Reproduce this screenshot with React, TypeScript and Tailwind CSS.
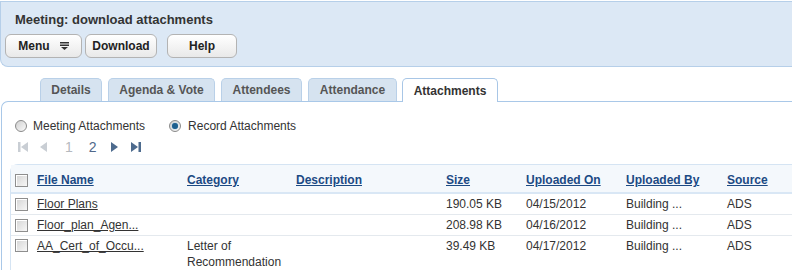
import React from "react";

const Check = () => (
  <div className="w-[13px] h-[13px] border border-[#8e8e8e] bg-gradient-to-br from-[#d4d4d4] to-[#f7f7f7] shadow-[inset_1px_1px_0_#fff]" />
);

const Radio = ({ on }: { on?: boolean }) => (
  <div className="w-[12px] h-[12px] rounded-full border border-[#8a8a8a] bg-gradient-to-br from-[#d0d0d0] to-[#fafafa] flex items-center justify-center">
    {on && <div className="w-[6px] h-[6px] rounded-full bg-[#1e5f8e] shadow-[0_0_1px_#5fa8d8]" />}
  </div>
);

const Btn = ({ children, w }: { children: React.ReactNode; w: string }) => (
  <div
    className={`${w} h-[24px] rounded-[6px] border border-[#b3b3b3] bg-gradient-to-b from-[#ffffff] to-[#e9e9e9] flex items-center justify-center text-[12px] font-bold text-[#222]`}
  >
    {children}
  </div>
);

const Tab = ({ children, w, active }: { children: React.ReactNode; w: string; active?: boolean }) => (
  <div
    className={`${w} h-[23px] rounded-t-[5px] border border-b-0 flex items-center justify-center text-[12px] font-bold ${
      active
        ? "bg-white border-[#a8c6e6] text-[#333] h-[24px] -mb-px"
        : "bg-[#d6e3f0] border-[#b9d0e8] text-[#555]"
    }`}
  >
    {children}
  </div>
);

const cols = "grid grid-cols-[20px_150px_109px_150px_80px_100px_101px_1fr]";

const rows = [
  { name: "Floor Plans", cat: [] as string[], size: "190.05 KB", on: "04/15/2012" },
  { name: "Floor_plan_Agen...", cat: [] as string[], size: "208.98 KB", on: "04/16/2012" },
  { name: "AA_Cert_of_Occu...", cat: ["Letter of", "Recommendation"], size: "39.49 KB", on: "04/17/2012" },
];

export default function App() {
  return (
    <div
      className="w-[792px] h-[270px] overflow-hidden bg-white text-[#333]"
      style={{ fontFamily: '"Liberation Sans", Arial, sans-serif' }}
    >
      <div className="mt-[1px] h-[66px] border border-r-0 border-[#b6cfe9] rounded-bl-[8px] bg-[#dce8f5] pl-[4px] pt-[10px]">
        <div className="pl-[10px] text-[13px] font-bold text-[#333] leading-[16px]">Meeting: download attachments</div>
        <div className="flex mt-[6px]">
          <Btn w="w-[77px]">
            <span className="mr-[10px]">Menu</span>
            <svg width="9" height="8" viewBox="0 0 9 8">
              <rect x="0" y="0" width="9" height="1.5" fill="#333" />
              <rect x="0" y="2.5" width="9" height="1.5" fill="#333" />
              <path d="M1 5 L8 5 L4.5 8 Z" fill="#333" />
            </svg>
          </Btn>
          <div className="w-[3px]" />
          <Btn w="w-[72px]">Download</Btn>
          <div className="w-[10px]" />
          <Btn w="w-[70px]">Help</Btn>
        </div>
      </div>

      <div className="flex gap-[6px] pl-[40px] mt-[11px]">
        <Tab w="w-[62px]">Details</Tab>
        <Tab w="w-[107px]">Agenda &amp; Vote</Tab>
        <Tab w="w-[81px]">Attendees</Tab>
        <Tab w="w-[89px]">Attendance</Tab>
        <div className="-ml-[1px]">
          <Tab w="w-[96px]" active>Attachments</Tab>
        </div>
      </div>

      <div className="ml-[1px] border-t border-l border-[#a9c8e8] rounded-tl-[7px] pt-[17px]">
        <div className="flex items-center text-[12px] h-[14px]">
          <div className="ml-[13px]"><Radio /></div>
          <span className="ml-[6px]">Meeting Attachments</span>
          <div className="ml-[24px]"><Radio on /></div>
          <span className="ml-[7px]">Record Attachments</span>
        </div>

        <div className="flex items-center h-[14px] mt-[7px] text-[14px]">
          <svg className="ml-[16px]" width="10" height="10" viewBox="0 0 10 10">
            <rect x="0" y="0" width="2.5" height="10" fill="#c9ced4" />
            <path d="M10 0 L10 10 L3 5 Z" fill="#c9ced4" />
          </svg>
          <svg className="ml-[11px]" width="8" height="10" viewBox="0 0 8 10">
            <path d="M8 0 L8 10 L1 5 Z" fill="#c9ced4" />
          </svg>
          <span className="ml-[18px] text-[#b5b9be]">1</span>
          <span className="ml-[16px] text-[#50688a]">2</span>
          <svg className="ml-[14px]" width="8" height="10" viewBox="0 0 8 10">
            <path d="M0 0 L0 10 L7 5 Z" fill="#4d6b8e" />
          </svg>
          <svg className="ml-[12px]" width="10" height="10" viewBox="0 0 10 10">
            <path d="M0 0 L0 10 L7 5 Z" fill="#4d6b8e" />
            <rect x="7.5" y="0" width="2.5" height="10" fill="#4d6b8e" />
          </svg>
        </div>

        <div className="ml-[8px] mt-[10px] border-t border-l border-[#d5e4f3] rounded-tl-[8px] text-[12px]">
          <div className={`${cols} h-[29px] pt-[3px] items-center bg-[#f4f8fc] border-b-2 border-[#d9e7f5] font-bold text-[#1c4a84]`}>
            <div className="pl-[4px]"><Check /></div>
            <span className="pl-[6px] underline">File Name</span>
            <span className="pl-[6px] underline">Category</span>
            <span className="pl-[6px] underline">Description</span>
            <span className="pl-[6px] underline">Size</span>
            <span className="pl-[6px] underline">Uploaded On</span>
            <span className="pl-[6px] underline">Uploaded By</span>
            <span className="pl-[6px] underline">Source</span>
          </div>
          {rows.map((r, i) => (
            <div key={i} className={`${cols} border-b border-[#e4e9ee] leading-[16px] ${i === 2 ? "pt-[2px] pb-[3px]" : "h-[21px] items-center"}`}>
              <div className={`pl-[4px] ${i === 2 ? "pt-[1px]" : ""}`}><Check /></div>
              <span className="pl-[6px] underline text-[#333]">{r.name}</span>
              <span className="pl-[6px]">
                {r.cat.map((c) => (
                  <div key={c}>{c}</div>
                ))}
              </span>
              <span />
              <span className="pl-[6px]">{r.size}</span>
              <span className="pl-[6px]">{r.on}</span>
              <span className="pl-[6px]">Building ...</span>
              <span className="pl-[6px]">ADS</span>
            </div>
          ))}
        </div>
      </div>
    </div>
  );
}
